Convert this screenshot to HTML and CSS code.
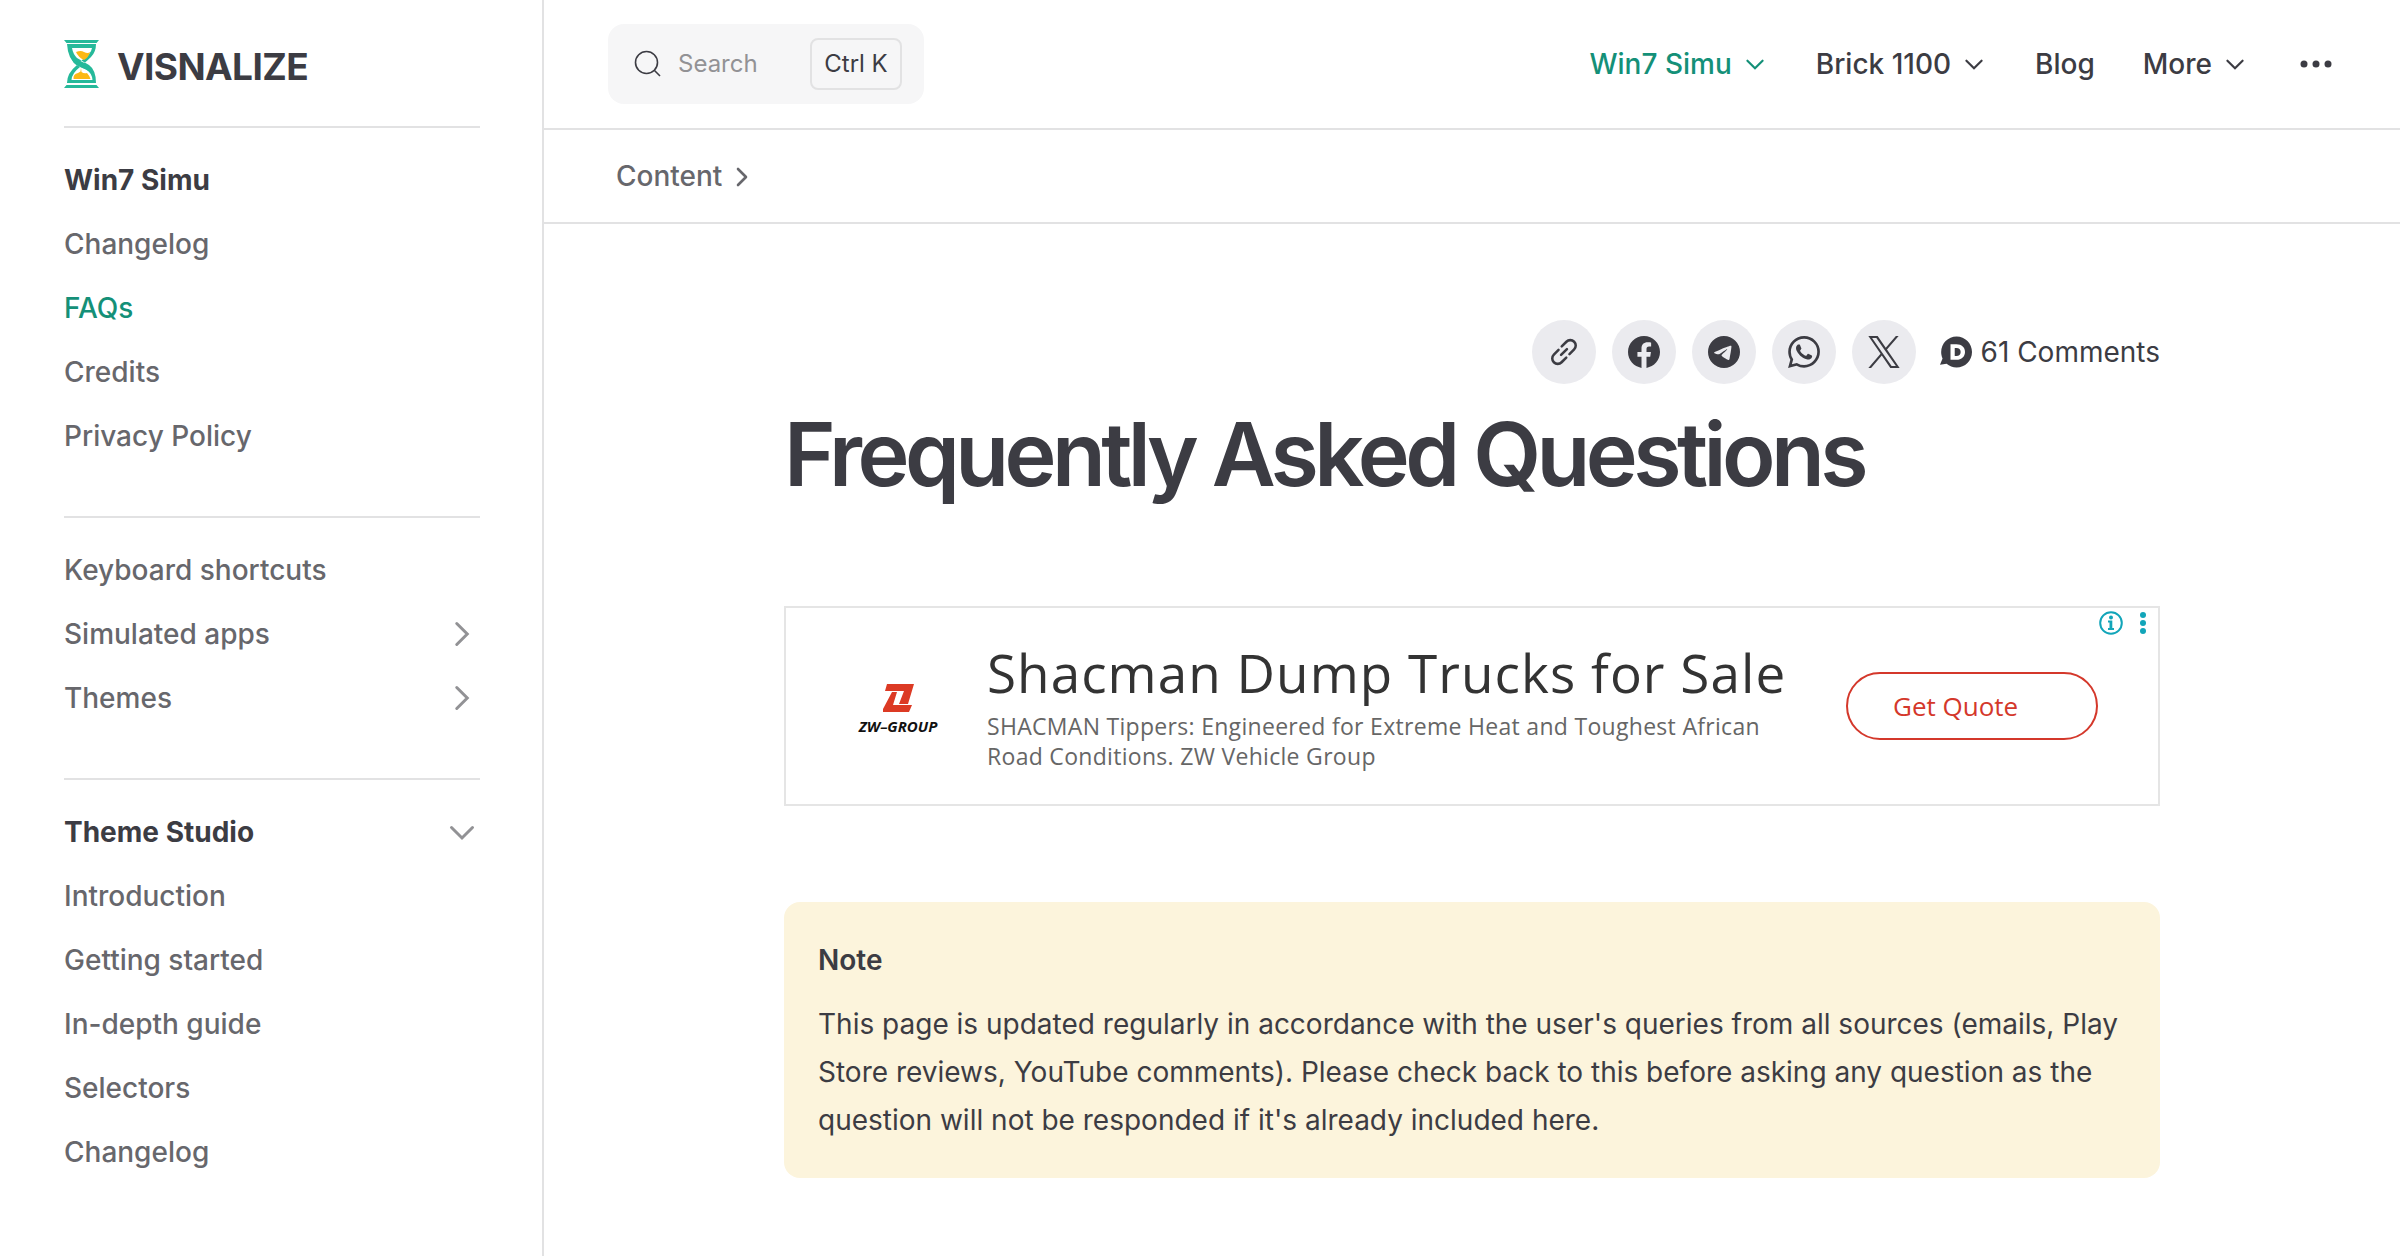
FILE: index.html
```html
<!DOCTYPE html>
<html lang="en">
<head>
<meta charset="utf-8">
<title>Frequently Asked Questions</title>
<link rel="stylesheet" href="styles.css">
</head>
<body>
<svg class="defs" aria-hidden="true">
  <symbol id="chev" viewBox="0 0 24 24"><path d="M8.5 5l7 7-7 7" fill="none" stroke="currentColor" stroke-width="2" stroke-linecap="round"/></symbol>
  <symbol id="chev-down" viewBox="0 0 24 24"><path d="M5 9l7 7 7-7" fill="none" stroke="currentColor" stroke-width="2" stroke-linecap="round"/></symbol>
</svg>
<div class="layout">
  <aside class="sidebar">
    <a class="brand">
      <svg class="brand-mark" viewBox="0 0 35 48">
        <path d="M0 0H35L32.5 3H2.5ZM0 48H35L32.5 45H2.500Z" fill="#26b99a"/>
        <path d="M3 4H32Q32 12 27 17Q24 20 20.500 23L16.500 21Q27 15 28 8H8Q9 14 13 18Q20 22 25 25Q32 30 32 43H3Q3 33 13 25L16 27Q8 33 7.500 40H28.500Q28 33 22 29.500Q17 27 13 24.500Q4 20 3 4Z" fill="#26b99a" fill-rule="evenodd"/>
        <path d="M6.500 15Q10 21 17 24Q26 28 29 34Q24 29.500 17 27.500Q7.500 24 6.500 15Z" fill="#26b99a"/>
        <path d="M12 12Q17 10 20 12Q24 14 26 12Q25 17 20 20Q14 17 12 12ZM9.500 39Q9 34 14 33L16.500 31.500L17 28L17.500 32Q20 34 23 33Q25 35 26.500 39Z" fill="#fcb813"/>
      </svg>
      <span class="brand-name">VISNALIZE</span>
    </a>
    <nav class="groups">
      <section class="group">
        <h2 class="item head">Win7 Simu</h2>
        <a class="item">Changelog</a>
        <a class="item active">FAQs</a>
        <a class="item">Credits</a>
        <a class="item">Privacy Policy</a>
      </section>
      <section class="group">
        <a class="item">Keyboard shortcuts</a>
        <a class="item">Simulated apps <svg class="caret"><use href="#chev"/></svg></a>
        <a class="item">Themes <svg class="caret"><use href="#chev"/></svg></a>
      </section>
      <section class="group">
        <h2 class="item head">Theme Studio <svg class="caret"><use href="#chev-down"/></svg></h2>
        <a class="item">Introduction</a>
        <a class="item">Getting started</a>
        <a class="item">In-depth guide</a>
        <a class="item">Selectors</a>
        <a class="item">Changelog</a>
      </section>
    </nav>
  </aside>
  <div class="page">
    <header class="topbar">
      <button class="search">
        <svg class="search-icon" viewBox="0 0 28 28" fill="none" stroke="currentColor" stroke-width="1.6"><circle cx="12.500" cy="12.500" r="11"/><path d="M20 20L26 26"/></svg>
        <span class="search-label">Search</span>
        <kbd class="keys">Ctrl K</kbd>
      </button>
      <nav class="menu">
        <a class="menu-item active">Win7 Simu <svg class="menu-caret"><use href="#chev-down"/></svg></a>
        <a class="menu-item">Brick 1100 <svg class="menu-caret"><use href="#chev-down"/></svg></a>
        <a class="menu-item">Blog</a>
        <a class="menu-item">More <svg class="menu-caret"><use href="#chev-down"/></svg></a>
        <svg class="dots" viewBox="0 0 32 8" fill="currentColor"><circle cx="4" cy="4" r="3.500"/><circle cx="16" cy="4" r="3.500"/><circle cx="28" cy="4" r="3.500"/></svg>
      </nav>
    </header>
    <div class="subbar">Content <svg class="sub-caret" viewBox="0 0 12 20"><path d="M2 2l8 8-8 8" fill="none" stroke="currentColor" stroke-width="2.600" stroke-linecap="round" stroke-linejoin="round"/></svg></div>
    <main class="doc">
      <div class="share">
        <a class="round"><svg viewBox="0 0 24 24" fill="none" stroke="currentColor" stroke-width="1.900" stroke-linecap="round"><path d="M9.800 14.200l4.400-4.400M10.300 7.800l3.500-3.500a4 4 0 0 1 5.800 5.800l-3.500 3.500M13.700 16.200l-3.500 3.500a4 4 0 0 1-5.800-5.800l3.500-3.500"/></svg></a>
        <a class="round"><svg viewBox="0 0 24 24" fill="currentColor"><path d="M24 12.073c0-6.627-5.373-12-12-12s-12 5.373-12 12c0 5.990 4.388 10.954 10.125 11.854v-8.385H7.078v-3.470h3.047V9.430c0-3.007 1.792-4.669 4.533-4.669 1.312 0 2.686.235 2.686.235v2.953H15.830c-1.491 0-1.956.925-1.956 1.874v2.250h3.328l-.532 3.470h-2.796v8.385C19.612 23.027 24 18.062 24 12.073z"/></svg></a>
        <a class="round"><svg viewBox="0 0 24 24" fill="currentColor"><path d="M11.944 0A12 12 0 0 0 0 12a12 12 0 0 0 12 12 12 12 0 0 0 12-12A12 12 0 0 0 12 0a12 12 0 0 0-.056 0zm4.962 7.224c.1-.002.321.023.465.140a.506.506 0 0 1 .171.325c.016.093.036.306.020.472-.180 1.898-.962 6.502-1.360 8.627-.168.900-.499 1.201-.820 1.230-.696.065-1.225-.460-1.900-.902-1.056-.693-1.653-1.124-2.678-1.800-1.185-.780-.417-1.210.258-1.910.177-.184 3.247-2.977 3.307-3.230.007-.032.014-.150-.056-.212s-.174-.041-.249-.024c-.106.024-1.793 1.140-5.061 3.345-.480.330-.913.490-1.302.480-.428-.008-1.252-.241-1.865-.440-.752-.245-1.349-.374-1.297-.789.027-.216.325-.437.893-.663 3.498-1.524 5.830-2.529 6.998-3.014 3.332-1.386 4.025-1.627 4.476-1.635z"/></svg></a>
        <a class="round"><svg viewBox="0 0 24 24" fill="currentColor"><path d="M17.472 14.382c-.297-.149-1.758-.867-2.030-.967-.273-.099-.471-.148-.670.150-.197.297-.767.966-.940 1.164-.173.199-.347.223-.644.075-.297-.150-1.255-.463-2.390-1.475-.883-.788-1.480-1.761-1.653-2.059-.173-.297-.018-.458.130-.606.134-.133.298-.347.446-.520.149-.174.198-.298.298-.497.099-.198.050-.371-.025-.520-.075-.149-.669-1.612-.916-2.207-.242-.579-.487-.500-.669-.510-.173-.008-.371-.010-.570-.010-.198 0-.520.074-.792.372-.272.297-1.040 1.016-1.040 2.479 0 1.462 1.065 2.875 1.213 3.074.149.198 2.096 3.200 5.077 4.487.709.306 1.262.489 1.694.625.712.227 1.360.195 1.871.118.571-.085 1.758-.719 2.006-1.413.248-.694.248-1.289.173-1.413-.074-.124-.272-.198-.570-.347m-5.421 7.403h-.004a9.870 9.870 0 0 1-5.031-1.378l-.361-.214-3.741.982.998-3.648-.235-.374a9.860 9.860 0 0 1-1.510-5.260c.001-5.450 4.436-9.884 9.888-9.884 2.640 0 5.122 1.030 6.988 2.898a9.825 9.825 0 0 1 2.893 6.994c-.003 5.450-4.437 9.884-9.885 9.884m8.413-18.297A11.815 11.815 0 0 0 12.050 0C5.495 0 .160 5.335.157 11.892c0 2.096.547 4.142 1.588 5.945L.057 24l6.305-1.654a11.882 11.882 0 0 0 5.683 1.448h.005c6.554 0 11.890-5.335 11.893-11.893a11.821 11.821 0 0 0-3.480-8.413z"/></svg></a>
        <a class="round"><svg viewBox="0 0 24 24" fill="currentColor"><path d="M14.234 10.162 22.977 0h-2.072l-7.591 8.824L7.251 0H.258l9.168 13.343L.258 24H2.330l8.016-9.318L16.749 24h6.993zm-2.837 3.299-.929-1.329L3.076 1.560h3.182l5.965 8.532.929 1.329 7.754 11.090h-3.182z"/></svg></a>
        <a class="comments"><svg class="disqus" viewBox="0 0 24 24" fill="currentColor"><path d="M12.438 23.654c-2.853 0-5.460-1.040-7.476-2.766L0 21.568l1.917-4.733C1.250 15.360.875 13.725.875 12 .875 5.564 6.050.346 12.440.346 18.820.346 24 5.564 24 12c0 6.438-5.176 11.654-11.562 11.654zm6.315-11.687v-.033c0-3.363-2.373-5.760-6.462-5.760H7.877V17.830h4.350c4.120 0 6.525-2.500 6.525-5.863h.004zm-6.415 2.998h-1.290V9.040h1.290c1.897 0 3.157 1.080 3.157 2.945v.030c0 1.884-1.260 2.950-3.157 2.950z"/></svg>61 Comments</a>
      </div>
      <h1 class="title">Frequently Asked Questions</h1>
      <section class="ad">
        <div class="ad-logo">
          <svg class="ad-mark" viewBox="0 0 31 28" fill="#dc3a24"><path d="M4 0H31L25 20H16L21 7H2ZM9 8H14L10 21H29L26 28H0V25Z"/></svg>
          <span class="ad-brand">ZW–GROUP</span>
        </div>
        <div class="ad-copy">
          <div class="ad-title">Shacman Dump Trucks for Sale</div>
          <p class="ad-text">SHACMAN Tippers: Engineered for Extreme Heat and Toughest African<br>Road Conditions. ZW Vehicle Group</p>
        </div>
        <a class="quote">Get Quote</a>
        <svg class="ad-choices" viewBox="0 0 48 24" fill="#12a5b9"><circle cx="12" cy="12" r="10.800" fill="none" stroke="#12a5b9" stroke-width="2"/><circle cx="12" cy="6.500" r="2"/><path d="M9 9.500h4.300v7.500H15v2H9v-2h1.500v-5.500H9z"/><circle cx="44" cy="4" r="3"/><circle cx="44" cy="12" r="3"/><circle cx="44" cy="20" r="3"/></svg>
      </section>
      <section class="note">
        <p class="note-title">Note</p>
        <p class="note-text">This page is updated regularly in accordance with the user's queries from all sources (emails, Play Store reviews, YouTube comments). Please check back to this before asking any question as the question will not be responded if it's already included here.</p>
      </section>
    </main>
  </div>
</div>
</body>
</html>
```
FILE: styles.css
```css
* { box-sizing: border-box; }
body { margin: 0; background: #fff; color: #3c3c43; font: 500 28px/48px Inter, sans-serif; }
h1, h2, p { margin: 0; }
svg { display: block; flex: none; }
.defs { display: none; }
.layout { display: flex; height: 1256px; overflow: hidden; }

.sidebar { width: 544px; flex: none; padding: 0 62px 0 64px; border-right: 2px solid #e2e2e3; }
.brand { display: flex; align-items: center; height: 126px; gap: 18px; }
.brand-mark { width: 35px; height: 48px; margin-top: 1px; }
.brand-name { font-size: 37px; font-weight: 700; letter-spacing: -0.6px; padding-top: 7px; }
.group { border-top: 2px solid #e2e2e3; padding: 20px 0 48px; }
.item { display: flex; align-items: center; justify-content: space-between; height: 64px; color: #67676c; font-size: 28px; font-weight: 500; }
.item.head { color: #3c3c43; font-weight: 700; }
.item.active, .menu-item.active { color: #149078; }
.caret { width: 36px; height: 36px; color: #929295; }

.page { flex: 1; min-width: 0; }
.topbar { height: 130px; border-bottom: 2px solid #e2e2e3; padding: 0 68px 0 64px; display: flex; align-items: center; justify-content: space-between; }
.search { width: 316px; height: 80px; border: 0; border-radius: 16px; background: #f6f6f7; padding: 0 22px 0 26px; display: flex; align-items: center; font: 400 24px/48px Inter, sans-serif; color: #3c3c43; }
.search-icon { width: 28px; height: 28px; }
.search-label { margin-left: 16px; color: #929295; }
.keys { margin-left: auto; width: 92px; height: 52px; border: 2px solid #e2e2e3; border-radius: 8px; font: inherit; text-align: center; }
.menu { display: flex; align-items: center; }
.menu-item { display: flex; align-items: center; padding: 0 24px; }
.menu-caret { width: 26px; height: 26px; margin-left: 10px; }
.dots { width: 32px; height: 8px; margin-left: 28px; }
.subbar { height: 94px; border-bottom: 2px solid #e2e2e3; padding-left: 72px; display: flex; align-items: center; color: #67676c; }
.sub-caret { width: 12px; height: 20px; margin: 2px 0 0 14px; }

.doc { width: 1376px; margin-left: 240px; padding-top: 96px; }
.share { display: flex; justify-content: flex-end; align-items: center; gap: 16px; }
.round { width: 64px; height: 64px; border-radius: 50%; background: #ebebef; display: flex; align-items: center; justify-content: center; }
.round svg, .disqus { width: 32px; height: 32px; }
.comments { display: flex; align-items: center; gap: 9px; margin-left: 8px; font-weight: 400; }
.title { font-size: 88px; line-height: 112px; font-weight: 600; letter-spacing: -4.6px; margin-top: 14px; white-space: nowrap; }

.ad { position: relative; margin-top: 96px; height: 200px; border: 2px solid #e5e5e5; display: flex; font-family: "Open Sans", sans-serif; font-weight: 400; }
.ad-logo { width: 78px; margin: 76px 0 0 73px; display: flex; flex-direction: column; align-items: center; }
.ad-mark { width: 31px; height: 28px; }
.ad-brand { font: italic 700 15px/20px "Open Sans", sans-serif; color: #111; margin-top: 4px; white-space: nowrap; }
.ad-copy { margin: 30px 0 0 50px; width: 859px; white-space: nowrap; }
.ad-title { font-size: 53px; line-height: 70px; color: #333; letter-spacing: 1.05px; }
.ad-text { font-size: 23px; line-height: 30px; color: #666; letter-spacing: 0.3px; margin-top: 3px; }
.quote { width: 252px; height: 68px; margin-top: 64px; border: 2px solid #d4382b; border-radius: 34px; color: #d4382b; font-size: 26px; line-height: 64px; padding-left: 45px; white-space: nowrap; }
.ad-choices { position: absolute; right: 11px; top: 3px; width: 48px; height: 24px; }

.note { margin-top: 96px; height: 276px; border-radius: 16px; background: #fcf4dc; padding: 34px; }
.note-title { font-weight: 600; }
.note-text { font-weight: 400; margin-top: 16px; }
```
